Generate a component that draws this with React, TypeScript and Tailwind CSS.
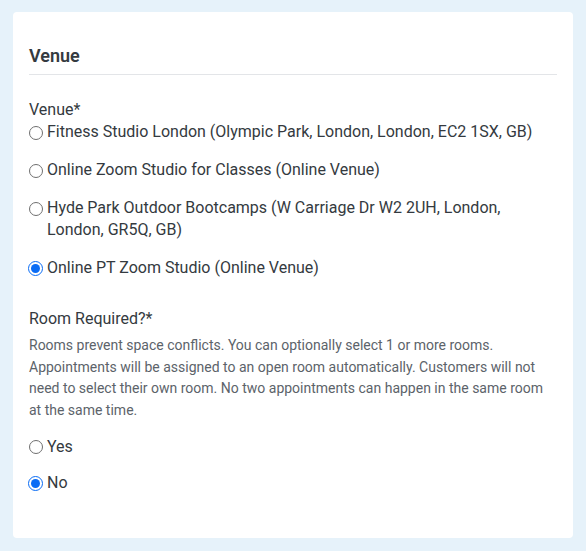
import { useState } from "react";

interface RadioRowProps {
  checked: boolean;
  label: string;
  onSelect: () => void;
}

function RadioRow({ checked, label, onSelect }: RadioRowProps) {
  return (
    <label onClick={onSelect} className="flex items-start gap-[4px] cursor-pointer text-[16px] leading-[22px] text-[#343a40]">
      <span className="mt-[4px] -ml-[1px] flex h-[15px] w-[15px] shrink-0 items-center justify-center">
        {checked ? (
          <span className="flex h-[15px] w-[15px] items-center justify-center rounded-full border-[1.5px] border-[#0a6cf5] bg-white">
            <span className="h-[9px] w-[9px] rounded-full bg-[#0a6cf5]" />
          </span>
        ) : (
          <span className="h-[14px] w-[14px] rounded-full border border-[#6f6f6f] bg-white" />
        )}
      </span>
      <span>{label}</span>
    </label>
  );
}

const venues = [
  "Fitness Studio London (Olympic Park, London, London, EC2 1SX, GB)",
  "Online Zoom Studio for Classes (Online Venue)",
  "Hyde Park Outdoor Bootcamps (W Carriage Dr W2 2UH, London, London, GR5Q, GB)",
  "Online PT Zoom Studio (Online Venue)",
];

export default function App() {
  const [venue, setVenue] = useState(3);
  const [room, setRoom] = useState("no");

  return (
    <div className="min-h-[551px] bg-[#e6f2fa] pt-[12px] pb-[13px] px-[13px] font-['Roboto',_'Liberation_Sans',_sans-serif]">
      <div className="w-[560px] h-[526px] rounded-[4px] bg-white px-[16px] pt-[31px]">
        <h2 className="border-b border-[#e3e5e8] pb-[6px] text-[18px] font-semibold leading-[25px] text-[#343a40]">Venue</h2>

        <div className="mt-[24px] text-[16px] leading-[22px] text-[#343a40]">Venue*</div>
        <div className="flex flex-col gap-[16px]">
          {venues.map((v, i) => (
            <RadioRow key={v} checked={venue === i} label={v} onSelect={() => setVenue(i)} />
          ))}
        </div>

        <div className="mt-[29px] text-[16px] leading-[22px] text-[#343a40]">Room Required?*</div>
        <p className="mt-[5px] text-[14px] leading-[21.7px] text-[#5c636a]">
          Rooms prevent space conflicts. You can optionally select 1 or more rooms. Appointments will be assigned to an open room automatically. Customers will not need to select their own room. No two appointments can happen in the same room at the same time.
        </p>
        <div className="mt-[14px] flex flex-col gap-[14px]">
          <RadioRow checked={room === "yes"} label="Yes" onSelect={() => setRoom("yes")} />
          <RadioRow checked={room === "no"} label="No" onSelect={() => setRoom("no")} />
        </div>
      </div>
    </div>
  );
}
